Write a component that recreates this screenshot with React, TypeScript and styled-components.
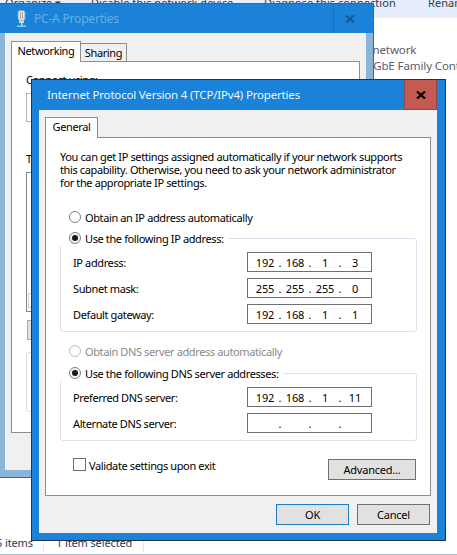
import React from "react";
import styled, { createGlobalStyle } from "styled-components";

const Global = createGlobalStyle`
  html, body { margin: 0; padding: 0; background: #fff; }
  #root { width: 457px; height: 555px; }
  * { box-sizing: border-box; }
`;

const UI = `"Noto Sans", "Open Sans", sans-serif`;

const Desktop = styled.div`
  position: relative;
  width: 457px;
  height: 555px;
  overflow: hidden;
  background: #fff;
  font-family: ${UI};
  font-size: 11px;
  letter-spacing: -0.38px;
  color: #000;
`;

/* Explorer window behind the dialogs */
const Explorer = styled.div`
  display: flex;
  flex-direction: column;
  height: 100%;
`;
const CommandBar = styled.div`
  height: 18px;
  flex: none;
  overflow: hidden;
  background: #e6edfb;
  display: flex;
  align-items: flex-start;
  padding-left: 5px;
  color: #2c3a58;
  letter-spacing: 0.05px;
  white-space: nowrap;
`;
const Command = styled.span<{ $w: number }>`
  width: ${(p) => p.$w}px;
  flex: none;
  margin-top: -5px;
  line-height: 16px;
`;
const ListArea = styled.div`
  flex: 1;
  padding: 24px 0 0 304px;
  color: #5c5c6c;
  white-space: nowrap;
  line-height: 16px;
  font-size: 11.5px;
  letter-spacing: -0.1px;
`;
const StatusBar = styled.div`
  height: 20px;
  flex: none;
  display: flex;
  align-items: flex-start;
  color: #2c3a58;
  border-bottom: 1px solid #a9b9cf;
  letter-spacing: -0.12px;
  white-space: nowrap;
`;
const StatusCell = styled.span<{ $w: number }>`
  width: ${(p) => p.$w}px;
  padding-left: 12px;
  height: 18px;
  line-height: 16px;
  border-right: 1px solid #e8e8e8;
  flex: none;
`;
const StatusCount = styled(StatusCell)`
  text-indent: -4px;
  padding-left: 0;
`;

/* Windows */
const BackWindow = styled.div`
  position: absolute;
  left: -2px;
  top: 3px;
  width: 376px;
  height: 475px;
  border: 1px solid #55606c;
  background: #8ab4d8;
  padding: 0 7px 7px 6px;
  display: flex;
  flex-direction: column;
`;
const BackTitle = styled.div`
  height: 29px;
  flex: none;
  margin: 0 -7px 0 -6px;
  padding: 0 7px 0 18px;
  background: #1a82d8;
  display: flex;
  align-items: center;
  gap: 8px;
  color: #6aaee6;
  font-size: 12px;
  letter-spacing: -0.2px;
`;
const BackTitleText = styled.span`
  flex: 1;
`;
const BackClose = styled.div`
  width: 33px;
  height: 29px;
  border-left: 1px solid #1772bd;
  display: flex;
  align-items: center;
  justify-content: center;
`;
const Body = styled.div`
  flex: 1;
  min-height: 0;
  background: #f0f0f0;
  display: flex;
  flex-direction: column;
  padding: 8px 6px 37px;
`;
const Tabs = styled.div`
  display: flex;
  align-items: flex-end;
  flex: none;
  margin-bottom: -1px;
  position: relative;
`;
const Tab = styled.div<{ $active?: boolean; $w: number }>`
  width: ${(p) => p.$w}px;
  height: ${(p) => (p.$active ? 21 : 19)}px;
  border: 1px solid #8e8e8e;
  border-bottom: ${(p) => (p.$active ? "none" : "1px solid #8e8e8e")};
  border-left: ${(p) => (p.$active ? "1px solid #8e8e8e" : "none")};
  background: ${(p) => (p.$active ? "#fff" : "#f0f0f0")};
  text-align: center;
  line-height: 18px;
`;
const Panel = styled.div`
  flex: 1;
  background: #fff;
  border: 1px solid #8e8e8e;
  display: flex;
  flex-direction: column;
`;
const BackPanel = styled(Panel)`
  padding: 11px 14px 0;
`;
const BackLabel = styled.div<{ $top?: number }>`
  line-height: 14px;
  margin-top: ${(p) => p.$top ?? 0}px;
  white-space: nowrap;
`;
const BackBox = styled.div`
  height: 29px;
  margin-top: 6px;
  border: 1px solid #b4b4b4;
`;
const BackList = styled.div`
  height: 140px;
  margin-top: 6px;
  border: 1px solid #85858f;
  padding: 120px 0 0 1px;
`;
const BackItem = styled.div`
  height: 15px;
  border: 1px solid #cfcfcf;
`;
const BackButton = styled.div`
  width: 80px;
  height: 20px;
  margin: 8px 0 0 1px;
  border: 1px solid #a8a8a8;
  background: #e1e1e1;
`;
const BackGroup = styled.div`
  height: 60px;
  margin-top: 12px;
  border: 1px solid #d9e2ec;
  border-radius: 3px;
`;

const MainWindow = styled.div`
  position: absolute;
  left: 31px;
  top: 79px;
  width: 415px;
  height: 462px;
  border: 1px solid #26323e;
  background: #1a82d8;
  padding: 0 8px 7px 7px;
  display: flex;
  flex-direction: column;
`;
const MainTitle = styled.div`
  height: 30px;
  flex: none;
  margin: 0 -8px 0 -7px;
  padding: 0 8px 0 15px;
  display: flex;
  align-items: flex-start;
  color: #eef5fc;
  font-size: 11.5px;
  letter-spacing: -0.18px;
`;
const MainTitleText = styled.span`
  flex: 1;
  line-height: 30px;
`;
const CloseButton = styled.div`
  width: 33px;
  height: 30px;
  background: #c45a50;
  border: 1px solid #8d4a48;
  border-top: none;
  display: flex;
  align-items: center;
  justify-content: center;
`;
const MainBody = styled.div`
  flex: 1;
  min-height: 0;
  background: #f0f0f0;
  display: flex;
  flex-direction: column;
  padding: 7px 6px 8px;
`;
const MainPanel = styled(Panel)`
  padding: 12px 13px 0 14px;
`;
const Intro = styled.p`
  margin: 0;
  line-height: 13px;
  white-space: nowrap;
`;
const RadioRow = styled.label<{ $disabled?: boolean; $top?: number }>`
  display: flex;
  align-items: center;
  gap: 4px;
  height: 16px;
  margin-top: ${(p) => p.$top ?? 0}px;
  padding-left: 9px;
  color: ${(p) => (p.$disabled ? "#8a8a8a" : "#000")};
  white-space: nowrap;
`;
const RadioDot = styled.span<{ $checked?: boolean; $disabled?: boolean }>`
  width: 12px;
  height: 12px;
  border-radius: 50%;
  flex: none;
  border: 1px solid ${(p) => (p.$disabled ? "#bcbcbc" : "#7e7e7e")};
  background: ${(p) => (p.$checked ? "#f4f4f4" : "#fff")};
  display: flex;
  align-items: center;
  justify-content: center;
  &::after {
    content: "";
    display: ${(p) => (p.$checked ? "block" : "none")};
    width: 6px;
    height: 6px;
    border-radius: 50%;
    background: #1a1a1a;
  }
`;
const Group = styled.div<{ $top: number }>`
  position: relative;
  margin-top: ${(p) => p.$top}px;
  border: 1px solid #d9e3ee;
  border-radius: 3px;
  padding: 13px 44px 7px 12px;
  display: flex;
  flex-direction: column;
  gap: 6px;
`;
const GroupLegend = styled.div`
  position: absolute;
  left: -1px;
  top: -9px;
  background: #fff;
  padding-right: 4px;
`;
const FieldRow = styled.div`
  display: flex;
  align-items: center;
  justify-content: space-between;
  height: 20px;
  white-space: nowrap;
`;
const IpBox = styled.div`
  width: 125px;
  height: 20px;
  border: 1px solid #707070;
  background: #fff;
  padding-left: 5px;
  display: flex;
  align-items: center;
  letter-spacing: -0.1px;
`;
const Octet = styled.span`
  width: 24px;
  text-align: center;
  flex: none;
`;
const Dot = styled.span`
  width: 6px;
  text-align: center;
  flex: none;
`;
const ValidateRow = styled.div`
  display: flex;
  justify-content: space-between;
  align-items: flex-start;
  margin-top: 17px;
  padding: 0 1px 0 13px;
`;
const CheckLabel = styled.label`
  display: flex;
  align-items: center;
  gap: 3px;
  height: 13px;
  white-space: nowrap;
`;
const CheckText = styled.span`
  margin-top: 2px;
`;
const CheckBox = styled.span`
  width: 13px;
  height: 13px;
  border: 1px solid #707070;
  background: #fff;
  flex: none;
`;
const Button = styled.button<{ $default?: boolean; $w: number }>`
  width: ${(p) => p.$w}px;
  height: 21px;
  padding: 0;
  font: inherit;
  letter-spacing: -0.2px;
  color: #000;
  background: #e1e1e1;
  border: 1px solid ${(p) => (p.$default ? "#1f7dbd" : "#707070")};
`;
const AdvancedButton = styled(Button)`
  margin-top: 1px;
`;
const Footer = styled.div`
  flex: none;
  display: flex;
  justify-content: flex-end;
  gap: 8px;
  margin-top: 8px;
  padding-right: 1px;
`;

const PlugIcon = () => (
  <svg width="9" height="17" viewBox="0 0 9 17" aria-hidden>
    <rect x="1" y="0.5" width="7" height="10" rx="2" fill="#e4e8ec" stroke="#8fa0ae" />
    <rect x="3" y="2" width="1" height="7" fill="#9aa6b0" />
    <rect x="5" y="2" width="1" height="7" fill="#9aa6b0" />
    <rect x="2" y="10.5" width="5" height="2.5" fill="#cfd6dc" />
    <rect x="4" y="13" width="1.5" height="3" fill="#bfe4f4" />
    <rect x="0" y="15.5" width="9" height="1.5" fill="#7fd0ee" />
  </svg>
);

const CloseX = ({ color }: { color: string }) => (
  <svg width="10" height="8" viewBox="0 0 10 8" aria-hidden>
    <path d="M1 0.5 L9 7.5 M9 0.5 L1 7.5" stroke={color} strokeWidth="2.2" fill="none" />
  </svg>
);

const IpField = ({ value }: { value: string[] }) => (
  <IpBox>
    {value.map((octet, i) => (
      <React.Fragment key={i}>
        <Octet>{octet}</Octet>
        {i < 3 && <Dot>.</Dot>}
      </React.Fragment>
    ))}
  </IpBox>
);

const Field = ({ label, value }: { label: string; value: string[] }) => (
  <FieldRow>
    <span>{label}</span>
    <IpField value={value} />
  </FieldRow>
);

export default function App() {
  return (
    <Desktop>
      <Global />
      <Explorer>
        <CommandBar>
          <Command $w={86}>Organize ▾</Command>
          <Command $w={173}>Disable this network device</Command>
          <Command $w={164}>Diagnose this connection</Command>
          <Command $w={60}>Rename this connection</Command>
        </CommandBar>
        <ListArea>
          <div>Unidentified network</div>
          <div>Realtek PCIe GbE Family Controller</div>
        </ListArea>
        <StatusBar>
          <StatusCount $w={44}>5 items</StatusCount>
          <StatusCell $w={100}>1 item selected</StatusCell>
        </StatusBar>
      </Explorer>

      <BackWindow>
        <BackTitle>
          <PlugIcon />
          <BackTitleText>PC-A Properties</BackTitleText>
          <BackClose>
            <CloseX color="#125c9a" />
          </BackClose>
        </BackTitle>
        <Body>
          <Tabs>
            <Tab $active $w={70}>Networking</Tab>
            <Tab $w={46}>Sharing</Tab>
          </Tabs>
          <BackPanel>
            <BackLabel>Connect using:</BackLabel>
            <BackBox />
            <BackLabel $top={30}>This connection uses the following items:</BackLabel>
            <BackList>
              <BackItem />
            </BackList>
            <BackButton />
            <BackGroup />
          </BackPanel>
        </Body>
      </BackWindow>

      <MainWindow>
        <MainTitle>
          <MainTitleText>Internet Protocol Version 4 (TCP/IPv4) Properties</MainTitleText>
          <CloseButton>
            <CloseX color="#000" />
          </CloseButton>
        </MainTitle>
        <MainBody>
          <Tabs>
            <Tab $active $w={53}>General</Tab>
          </Tabs>
          <MainPanel>
            <Intro>
              You can get IP settings assigned automatically if your network supports
              <br />
              this capability. Otherwise, you need to ask your network administrator
              <br />
              for the appropriate IP settings.
            </Intro>
            <RadioRow $top={20}>
              <RadioDot />
              Obtain an IP address automatically
            </RadioRow>
            <Group $top={13}>
              <GroupLegend>
                <RadioRow>
                  <RadioDot $checked />
                  Use the following IP address:
                </RadioRow>
              </GroupLegend>
              <Field label="IP address:" value={["192", "168", "1", "3"]} />
              <Field label="Subnet mask:" value={["255", "255", "255", "0"]} />
              <Field label="Default gateway:" value={["192", "168", "1", "1"]} />
            </Group>
            <RadioRow $disabled $top={11}>
              <RadioDot $disabled />
              Obtain DNS server address automatically
            </RadioRow>
            <Group $top={14}>
              <GroupLegend>
                <RadioRow>
                  <RadioDot $checked />
                  Use the following DNS server addresses:
                </RadioRow>
              </GroupLegend>
              <Field label="Preferred DNS server:" value={["192", "168", "1", "11"]} />
              <Field label="Alternate DNS server:" value={["", "", "", ""]} />
            </Group>
            <ValidateRow>
              <CheckLabel>
                <CheckBox />
                <CheckText>Validate settings upon exit</CheckText>
              </CheckLabel>
              <AdvancedButton $w={88}>Advanced...</AdvancedButton>
            </ValidateRow>
          </MainPanel>
          <Footer>
            <Button $default $w={73}>OK</Button>
            <Button $w={73}>Cancel</Button>
          </Footer>
        </MainBody>
      </MainWindow>
    </Desktop>
  );
}
